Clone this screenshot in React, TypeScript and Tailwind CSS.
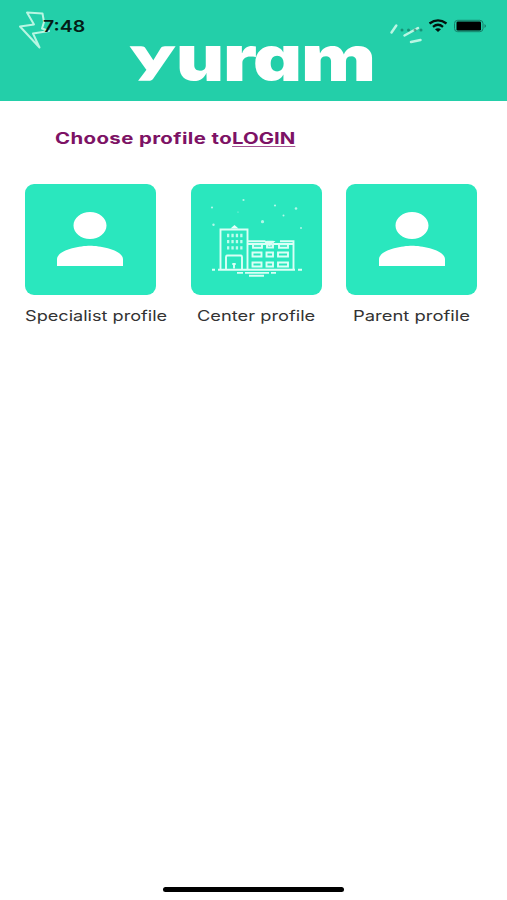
import type { ReactNode } from "react";

interface ProfileCardProps {
  children: ReactNode;
  className?: string;
}

function ProfileCard({ children, className = "" }: ProfileCardProps) {
  return (
    <button
      className={`flex h-[111.5px] w-[131px] shrink-0 items-center justify-center rounded-[9px] bg-[#2ae7be] ${className}`}
    >
      {children}
    </button>
  );
}

function PersonIcon({ className = "" }: { className?: string }) {
  return (
    <svg
      className={className}
      width="66"
      height="54"
      viewBox="4 4 16 16"
      preserveAspectRatio="none"
      fill="white"
    >
      <path d="M12 12c2.21 0 4-1.79 4-4s-1.79-4-4-4-4 1.79-4 4 1.79 4 4 4zm0 2c-2.67 0-8 1.34-8 4v2h16v-2c0-2.66-5.33-4-8-4z" />
    </svg>
  );
}

function BuildingIcon() {
  return (
    <svg className="-mt-[2px]" width="131" height="112" viewBox="0 0 131 112" fill="none" stroke="#dafff6" strokeWidth="1.9">
      {/* Tower */}
      <path d="M29.500 87V47.500h27V87M35 87V75q0-1.500 1.500-1.500h13q1.500 0 1.500 1.500v12M43 81.500v5M41.300 82h3.400" />
      <path d="M39.500 46.500h8l-4-3.500z" fill="#eafffa" stroke="none" />
      <path d="M36 53.500h16M36 59.700h16M36 65.800h16" strokeWidth="3.300" strokeDasharray="2.300 2.100" opacity="0.85" />
      {/* Wing */}
      <path d="M57 62h17.500l1.500-2.200h6.500M89 59.300H102.500V87M57 59.300h17.500M82 62h20" />
      <path d="M75 60l3.500 3 3.500-3z" fill="#eafffa" />
      <path d="M62 62.300h9v3.500h-9zM76 62.500h6v3h-6zM88 62.300h9v3.500h-9z" />
      <path d="M61.500 70.500h9v4h-9zM75.500 70.500h6.500v4h-6.500zM87 70.500h10v4H87zM61.500 80.500h9v4h-9zM75.500 80.500h6.500v4h-6.500zM87 80.500h10v4H87z" />
      {/* Ground */}
      <path d="M27 87.700h77M21 87.700h3M107 87.700h4M46 90.900h6M54 90.900h24M80 90.900h5M58 93.700h15" />
      {/* Sky */}
      <g fill="#eafffa" stroke="none" opacity="0.7">
        <circle cx="21" cy="25.500" r="1.100" />
        <circle cx="52.500" cy="18" r="1.100" />
        <circle cx="47" cy="30" r="0.600" />
        <circle cx="84" cy="23.500" r="1.100" />
        <circle cx="105" cy="26.500" r="1.300" />
        <circle cx="92.500" cy="33.500" r="1" />
        <circle cx="71.500" cy="39.700" r="1.600" />
        <circle cx="22.500" cy="42.800" r="1.200" />
        <circle cx="110" cy="46" r="1" />
      </g>
    </svg>
  );
}

function Logo() {
  return (
    <svg
      className="h-[101px] w-[265px] overflow-visible"
      viewBox="-6 -31 265 101"
      fill="white"
      fontFamily="Inter, sans-serif"
      fontWeight="900"
      fontSize="64"
    >
      <text y="50">
        <tspan x="4.500" y="40.500" fontFamily="Lato, sans-serif" fontSize="48" stroke="white" strokeWidth="1.500" textLength="42" lengthAdjust="spacingAndGlyphs">y</tspan>
        <tspan x="49" y="50" textLength="48" lengthAdjust="spacingAndGlyphs">u</tspan>
        <tspan x="96" textLength="34" lengthAdjust="spacingAndGlyphs">r</tspan>
        <tspan x="126" textLength="49" lengthAdjust="spacingAndGlyphs" className="[font-feature-settings:'cv11']">a</tspan>
        <tspan x="174" textLength="75" lengthAdjust="spacingAndGlyphs">m</tspan>
      </text>
    </svg>
  );
}

function Header() {
  return (
    <header className="relative flex h-[101px] shrink-0 justify-center bg-[#23cfa9]">
      <Logo />

      {/* Logo sparks */}
      <svg className="absolute top-0 left-0" width="507" height="60" fill="none" stroke="#b9f6e3" strokeLinecap="round" strokeLinejoin="round">
        <path d="M27 12.500L42.500 13.500L44 22L42 28.500L49 31L33 33.500L39.500 47.500L20 26.500L34 24.500Z" strokeWidth="2" />
        <path d="M391.500 32.500l4.800-7M404.500 35.500l13.500-7.500M411 42l9.500-2" strokeWidth="2.500" />
      </svg>

      {/* Status bar */}
      <div className="absolute inset-x-0 top-0 h-[50px] text-[#041d17]">
        <span className="absolute top-[14px] left-[43px] origin-left scale-x-[1.22] font-[Inter,sans-serif] text-[16px] leading-6 font-semibold">
          7:48
        </span>
        <svg className="absolute top-0 right-0" width="137" height="50" fill="none">
          <g fill="#0a5947" opacity="0.5">
            <circle cx="32" cy="30" r="1.500" />
            <circle cx="38.500" cy="30" r="1.500" />
            <circle cx="45" cy="30" r="1.500" />
            <circle cx="51" cy="30" r="1.500" />
          </g>
          <path d="M59.500 23.500Q68 17.200 76.500 23.500M63 26.800Q68 22.800 73 26.800" stroke="#02110d" strokeWidth="2.300" />
          <path d="M65 29.200Q68 27.200 71 29.200L68 32Z" fill="#02110d" />
          <rect x="84.500" y="20.300" width="28.500" height="11.400" rx="3.200" stroke="#168069" />
          <rect x="86.500" y="21.500" width="24.500" height="9" rx="1.300" fill="black" />
          <path d="M114.500 24v4q3-2 0-4z" fill="#168069" />
        </svg>
      </div>
    </header>
  );
}

export default function App() {
  return (
    <div className="flex h-[900px] w-[507px] flex-col overflow-hidden bg-white font-[Inter,sans-serif]">
      <Header />

      <main className="flex flex-1 flex-col">
        <h1 className="mt-[26px] ml-[55px] w-max origin-left scale-x-[1.315] text-[15.5px] leading-6 font-bold text-[#7d1265]">
          <span className="tracking-[0.3px]">Choose profile to</span>
          <a className="underline decoration-[#a35392] decoration-1 underline-offset-[2px]">LOGIN</a>
        </h1>

        <div className="mt-[32.5px] flex pl-[25px]">
          <ProfileCard>
            <PersonIcon className="mr-px" />
          </ProfileCard>
          <ProfileCard className="ml-[35px]">
            <BuildingIcon />
          </ProfileCard>
          <ProfileCard className="ml-[24px]">
            <PersonIcon />
          </ProfileCard>
        </div>

        <div className="mt-[9px] flex pl-[25px] text-[14.5px] leading-6 whitespace-nowrap text-[#333333]">
          <span className="w-[172px] origin-left scale-x-[1.25]">Specialist profile</span>
          <span className="w-[156px] origin-left scale-x-[1.26]">Center profile</span>
          <span className="origin-left scale-x-[1.27]">Parent profile</span>
        </div>
      </main>

      <div className="mb-[8px] h-[5px] w-[181px] self-center rounded-full bg-black" />
    </div>
  );
}
